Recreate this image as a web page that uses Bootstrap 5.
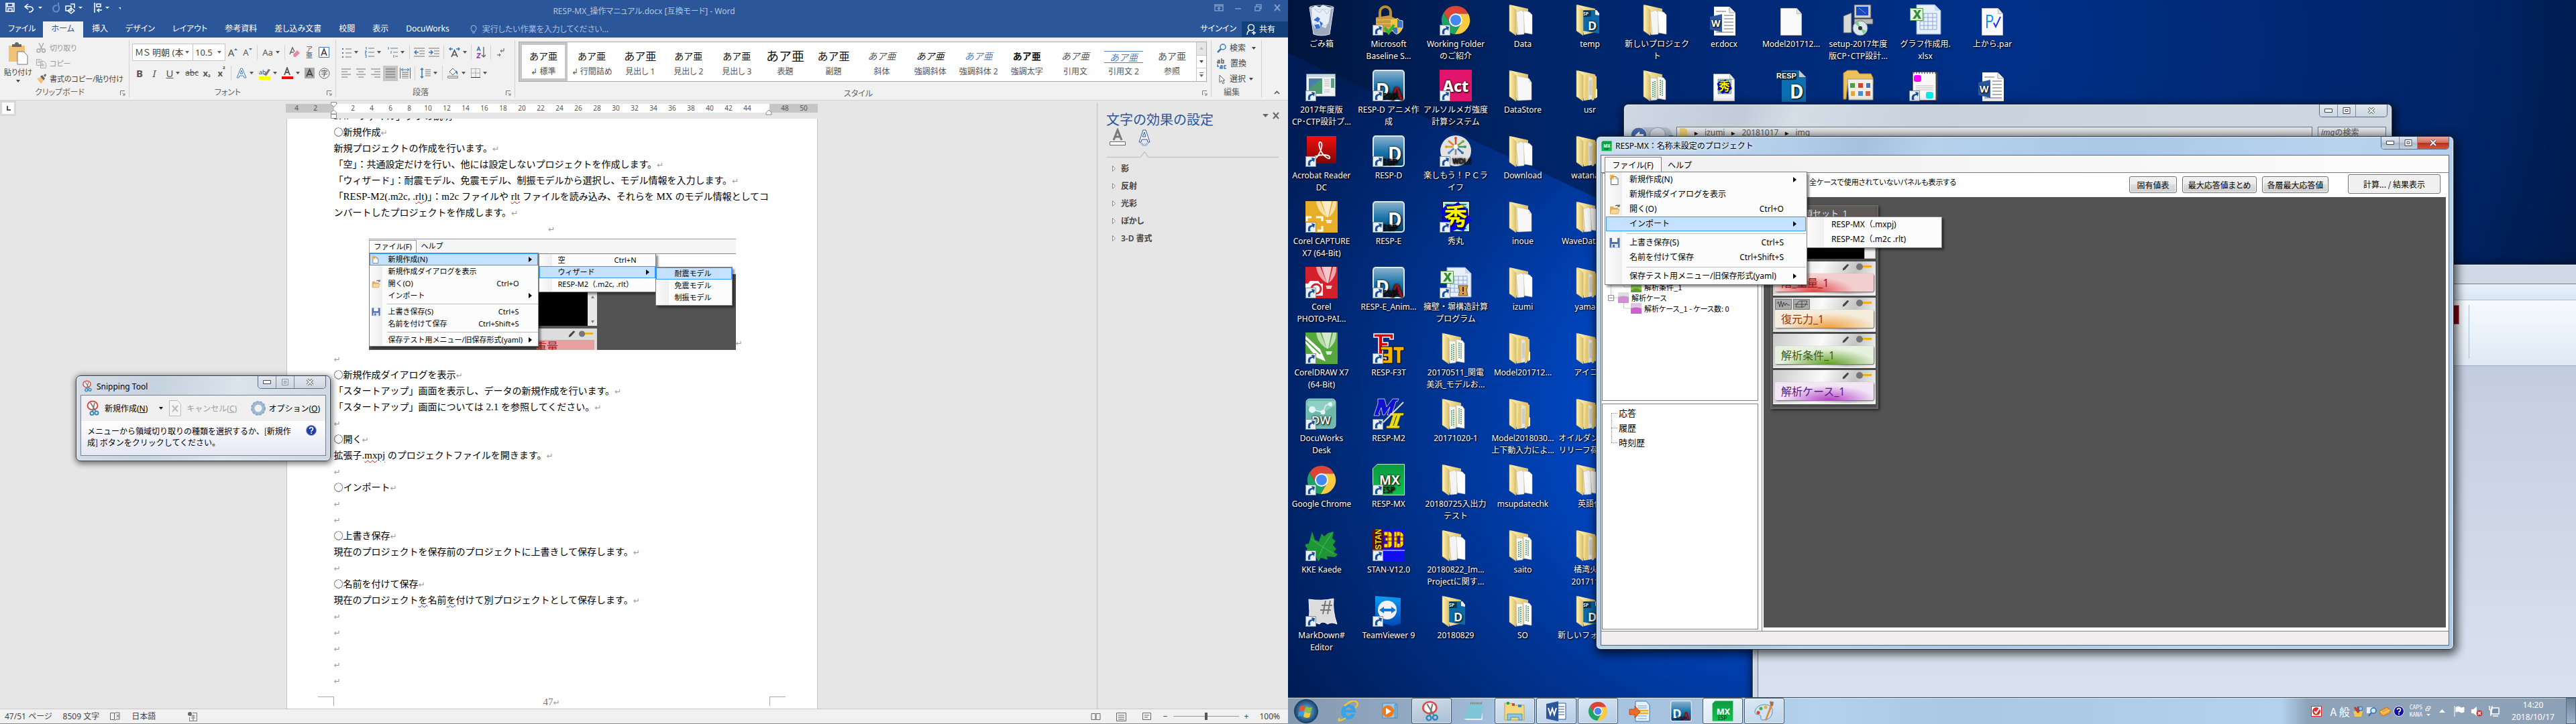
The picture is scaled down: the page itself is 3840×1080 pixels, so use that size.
<!DOCTYPE html>
<html lang="ja">
<head>
<meta charset="utf-8">
<meta name="viewport" content="width=device-width, initial-scale=1">
<title>RESP-MX_操作マニュアル.docx [互換モード] - Word</title>
<link href="https://cdn.jsdelivr.net/npm/bootstrap@5.3.0/dist/css/bootstrap.min.css" rel="stylesheet">
<style>
:root{--ui:"Noto Sans","Noto Sans CJK JP",sans-serif;--jp:"Noto Sans CJK JP","Noto Sans",sans-serif;--word:#2b579a}
body{margin:0;font:12px/18px var(--ui);color:#000;overflow:hidden}
button,select,input{font:inherit;color:inherit}
svg{flex:none;display:block}
.screen{flex:1 1 50%;min-width:0;height:100vh;position:relative;overflow:hidden}
.defs{position:absolute;width:0;height:0}
.plain{border:0;background:none;padding:0;text-align:left;white-space:nowrap}

/* ---------- Word ---------- */
.word{background:#e6e6e6;font-family:var(--ui);font-feature-settings:"palt"}
.w-title{background:var(--word);height:32px;color:#b4c5df;padding:4px 8px 0}
.w-title .wing{flex:1 1 0}
.w-title .mid{padding-top:4px;white-space:nowrap}
.w-tabs{background:var(--word);height:24px}
.w-tabs .rtab{color:#fff;text-decoration:none;padding:0 13px;line-height:22px;height:24px;white-space:nowrap}
.w-tabs .rtab.first{padding:0 10px 0 12px}
.w-tabs .rtab.on{background:#f1f1f1;color:var(--word)}
.w-tabs .hint{color:#a9bfdf;padding-left:18px}
.share{background:#124078;color:#fff;width:69px;height:23px;padding-left:6px}
.ribbon{background:#f1f1f1;height:94px;border-bottom:1px solid #d2d0d0;padding-top:4px;color:#444}
.rgroup{border-right:1px solid #d2d2d2;height:85px;position:relative}
.rg-clip{width:193px}.rg-font{width:308px}.rg-para{width:267px}.rg-edit{width:75px}.rg-end{width:39px}
.rg-clip .rtop{font-size:11px}
.rlabel{height:18px;line-height:18px;color:#666;text-align:center;padding-right:14px}
.rlabel svg{position:absolute;right:5px;bottom:2px}
.rbody{height:69px;padding:6px 4px 0;gap:7px}
.rtop{height:69px}
.rrow{height:24px}
.rb{border:0;background:none;padding:0;width:22px;height:23px;display:inline-flex;align-items:center;justify-content:center;flex:none;color:#555;font-size:15px}
.rb.sp{width:34px;gap:4px}
.rb.sel{background:#c6c6c6}
.rb.mid{font-size:13px}.rb.low{font-size:12px}
.rb.ruby{font-size:10px;line-height:9px}
.vs{width:1px;height:22px;background:#d2d2d2;margin:0 3px;flex:none}
.combo{appearance:none;border:1px solid #c6c6c6;background:#fff no-repeat right 5px center url("data:image/svg+xml,%3Csvg xmlns='http://www.w3.org/2000/svg' width='6' height='4'%3E%3Cpath d='M0 0h6L3 4z' fill='%23666'/%3E%3C/svg%3E");height:26px;padding:0 14px 0 3px;color:#444;border-radius:0;font-size:13px;line-height:22px}
.combo.a{width:91px}.combo.b{width:48px;border-left:0}
.toolbtn{height:23px;gap:5px;color:#444;display:flex;align-items:center}
.toolbtn.dis{color:#9a9a9a}
.pastebtn{width:54px;height:66px;color:#444;padding-top:3px;display:flex;flex-direction:column;align-items:center;gap:2px}
.gal{border:1px solid #ababab;background:#fff;height:60px;margin:2px 6px 0 5px}
.gal .sty{border:4px solid transparent;background:none;padding:0;flex:1 1 72px;min-width:0;text-align:center;color:#555;height:58px}
.gal .sty.on{border-color:#c6c6c6}
.gal .smp{display:block;font:14px/24px var(--jp);color:#111;font-feature-settings:normal;margin-top:4px;white-space:nowrap}
.gal .smp.h1x{font-size:16px}.gal .smp.h0x{font-size:19px}
.gal .smp.blue{color:#4f81bd}.gal .smp.soft{color:#555}
.gal .smp.lined{border:solid;border-width:1px 0;line-height:16px;margin:9px 3px 3px}
.gal .cap{display:block;font-size:12px;line-height:20px;margin-top:2px;white-space:nowrap}
.galbar{width:15px;border-left:1px solid #c6c6c6}
.galbar button{flex:1;border:0;border-bottom:1px solid #c6c6c6;background:#fff;padding:0;display:flex;align-items:center;justify-content:center}
.galbar button:last-child{border:0}
.galbar .off{background:#e6e6e6;color:#bbb}
.w-doc{padding-left:10px}
.tabbox{left:0;top:0;width:24px;height:23px;background:#d9d9d9;padding:3px}
.tabbox span{display:block;background:#fdfdfd;height:17px}
.ruler{width:793px;height:13px;margin-top:5px;font:10px/13px var(--ui);color:#555;background:#fff}
.ruler .g{background:#c6c6c6;width:72px;padding-left:2px}
.ruler .g.end{padding-left:9px}
.ruler .w{padding-left:14px}
.ruler i{width:28px;text-align:center;font-style:normal;flex:none}
.stops{left:492px;top:2px}
.sheet{width:792px;background:#fff;border:solid #c6c6c6;border-width:0 1px;padding:0 71px 0 70px;overflow:hidden;margin-top:9px;font:14px/24px var(--jp);font-feature-settings:normal;color:#000}
.sheet p{margin:0;height:24px;white-space:nowrap}
.sheet p:first-child{margin-top:-17px}
.pm::after{content:"↵";font:12px/12px "DejaVu Sans";color:#999}
.sheet .lat{font-family:"Liberation Serif",serif;font-size:15px}
.sq{text-decoration:underline wavy #e00 1px;text-underline-offset:2px}
.sqb{text-decoration:underline wavy #22f 1px;text-underline-offset:2px}
.fig{height:170px;padding:4px 0 0 52px}
.foot{margin:13px -24px 0}
.foot .cm{width:24px;height:14px;border-top:1px solid #aaa}
.foot .cl{border-right:1px solid #aaa}.foot .cr{border-left:1px solid #aaa}
.foot .no{color:#777;line-height:14px}
.w-pane{width:285px;border-left:1px solid #c0c0c0;margin-top:3px;padding:14px 13px 0 13px;color:#444}
.w-pane h2{font:20px/24px var(--ui);color:var(--word);margin:0;font-feature-settings:normal}
.w-pane li{height:26px;line-height:26px;font-weight:600;gap:7px;padding-left:9px}
.w-status{background:#f1f1f1;border-top:1px solid #c6c6c6;border-bottom:1px solid #8a8a8a;height:23px;color:#444;padding:0 12px 0 7px;line-height:20px}
.zoomer{appearance:none;width:98px;height:12px;background:linear-gradient(#999,#999) center/100% 1px no-repeat}
.zoomer::-webkit-slider-thumb{appearance:none;width:4px;height:11px;background:#555}

/* ---------- menus shared by the figure in the document and the live window ---------- */
.mnu{background:#fcfcfc;border:1px solid #808080;padding:0 1px 1px;box-shadow:3px 3px 3px rgba(0,0,0,.45);background-image:linear-gradient(90deg,#fcfcfc,#eee);background-repeat:no-repeat;background-size:25px 100%}
.mi{height:22px;border:1px solid transparent;display:flex;align-items:center;padding:0 13px 0 0;color:#000;text-decoration:none;white-space:nowrap}
.mi.on{background:#c4e1ff;border-color:#3399ff}
.mi .ic{width:34px;padding-left:4px;flex:none}
.mi .key{margin-left:auto;margin-right:19px}
.mi .tri{margin-left:auto;border:4px solid transparent;border-left:5px solid #000;border-right:0}
.ms{height:6px;display:flex;align-items:center}
.ms::after{content:"";height:1px;background:#bdbdbd;flex:1;margin-left:31px}

.figbox{width:547px;height:166px;position:relative;overflow:hidden;background:#535353;font:11px/16px var(--ui)}
.figbar{height:23px;background:#f5f5f5;border-top:1px solid #99a;border-bottom:1px solid #888;padding-top:1px}
.figbar span{padding:1px 6px 0 7px;height:20px;white-space:nowrap}
.figbar .tb{background:#fff;border:1px solid #999;border-bottom:0;width:71px}
.figwhite{height:30px;background:#fff}
.figbox .mnu{position:absolute;background-size:19px 100%;padding:0}
.figbox .mi{height:18px;padding-right:8px}
.figbox .mi .ic{width:27px;padding-left:2px}
.f1{left:0;top:21px;width:253px}
.f2{left:253px;top:22px;width:175px;height:58px}
.f3{left:427px;top:42px;width:115px;height:58px}
.figbox .ms::after{margin-left:26px}
.figunder{position:absolute;left:250px;top:80px;width:90px;height:87px}

/* ---------- Aero windows ---------- */
.aero{position:absolute;border:1px solid #303a46;border-radius:7px;box-shadow:0 0 0 1px rgba(255,255,255,.6) inset,2px 4px 14px 3px rgba(0,0,0,.65)}
.capb{position:absolute;top:0;right:6px;height:19px;border:1px solid #5c6b7d;border-top:0;border-radius:0 0 5px 5px;overflow:hidden;display:flex}
.capb button{border:0;border-right:1px solid #7f8d9c;padding:0;width:27px;background:linear-gradient(#dfe8f2,#c3cfdd 48%,#a9b8ca 50%,#c5d3e2);display:flex;align-items:center;justify-content:center}
.capb button:last-child{border:0;width:46px}
.capb button.red{background:linear-gradient(#e6a697,#d4705c 48%,#b8301c 50%,#d2583c)}
.snip{left:113px;top:560px;width:380px;height:128px;background:linear-gradient(100deg,#d6dde6,#c6d2df 30%,#dbe3ec 60%,#cdd8e4);box-shadow:0 0 0 1px rgba(255,255,255,.6) inset,1px 2px 8px 2px rgba(0,0,0,.5);font:12px/17px var(--ui);font-feature-settings:normal}
.snip .tt{height:28px;padding:2px 0 0 8px;gap:4px}
.snip .cli{margin:0 6px;height:91px;border:1px solid #76818d;background:#f0f0f0}
.snip .bar{height:38px;padding:0 8px 0 7px}
.snip .msg{height:51px;background:linear-gradient(#fff,#e4e6f3);padding:6px 9px 0 9px;font-family:var(--jp);white-space:nowrap}
.capb.gl button{background:linear-gradient(#e2e8ef,#ccd6e1)}
.off-text{color:#a0a0a0}

/* ---------- desktop ---------- */
.desk{background:radial-gradient(circle 1300px at 1050px 60px,#00308a,#002466 55%,#000a1e)}
.desk::before{content:"";position:absolute;inset:0;clip-path:polygon(0 79px,1920px 983px,1920px 1080px,0 1080px);background:radial-gradient(ellipse 900px 800px at 780px 620px,#0052dc,#0044bc 40%,#002a78 78%,#001c56)}
.icons{position:relative;display:grid;grid-auto-flow:column;grid-template-rows:repeat(10,98px);grid-auto-columns:100px;justify-content:start;z-index:0}
.icons.more{position:absolute;left:500px;top:0;grid-template-rows:repeat(2,98px)}
.di{display:flex;flex-direction:column;align-items:center;padding-top:6px;color:#fff;text-decoration:none;text-align:center;text-shadow:1px 1px 2px #000,0 0 3px #000;font:12px/18px var(--ui);width:100px}
.di svg{width:48px;height:48px;margin-bottom:3px}
.di span{white-space:nowrap}

.expl{left:500px;top:155px;width:1146px;height:400px;background:linear-gradient(110deg,#cfd8e3,#c2ccd8 14%,#d5dde7 20%,#c9d2dd 34%,#d0d9e3);border-radius:7px 7px 0 0}
.expl .nav{margin-top:33px;padding-left:8px;height:28px;color:#555}
.addr{border:1px solid #6e7782;background:linear-gradient(#e6e8ea,#b5b8bb);height:27px;padding:0 4px;gap:10px;line-height:16px}
.addr b{color:#111;font-size:10px;line-height:16px}
.addr.find{width:102px;gap:0}
.paint{left:692px;top:394px;right:-6px;height:660px;background:#d0d9e5;border-radius:7px 0 0 0;border-color:#4c5661}
.paint .inner{margin:28px 0 0 7px;border:1px solid #6e7a88;border-right:0;background:linear-gradient(#dfe8f4,#d5dfec);height:640px}
.paint .m1{height:24px;background:linear-gradient(#e8f0fa,#dbe6f4);border-bottom:1px solid #aebfd2}
.paint .m2{height:98px;background:linear-gradient(#f6fafe,#dfe9f5);border-bottom:1px solid #9db0c6;padding:7px 164px 7px 0}
.paint .m2 .swatch{width:24px;height:29px;border:1px solid #8a96a4;background:#880015;margin-right:14px}
.paint .m2 .rule{width:1px;height:80px;background:#aebfd2}
.paint .m3{height:510px;background:linear-gradient(#c3cddf,#d9e3f0)}
.mx{left:459px;top:203px;width:1279px;height:766px;background:linear-gradient(105deg,#c9dcf0,#b2cde9 20%,#a6c1dd 27%,#b5d1ec 34%,#a9c8e6 52%,#b8d3ee 75%,#aecbe8);z-index:3}
.mx .tt{height:27px;padding:0 0 0 7px;gap:5px}
.mx .tt span{text-shadow:0 0 6px #fff,0 0 8px #fff}
.mx .cli{margin:0 6px 0 6px;border:1px solid #5a6673;background:#fff;height:732px;position:relative}
.mbar{height:26px;background:linear-gradient(90deg,#f0f0f0,#fcfcfc);border-bottom:1px solid #7c7c7c;padding:2px 0 0 5px}
.mbar button{border:1px solid transparent;border-bottom:0;background:none;height:24px;padding:0 9px 0 8px;color:#000;white-space:nowrap}
.mbar button.on{background:#f9f9f9;border-color:#808080;width:85px}
.box{border:1px solid #808080;background:#fff;overflow:hidden}
.gui{font-family:var(--jp);font-feature-settings:"palt"}
.tree1{height:340px;padding:161px 0 0 8px;font-size:11px;white-space:nowrap}
.tree1 div{height:16px;line-height:16px}
.tree2{font-size:13px;flex:1;padding-top:2px}
.tree2 li{height:22px;line-height:22px;padding-left:24px}
.side{width:234px;padding:0 0 2px 1px;gap:4px}
.main{border-left:1px solid #808080;padding-left:2px;margin-left:5px;padding-right:4px;padding-bottom:5px}
.tools{height:36px;background:#fff;padding:3px 8px 0 52px;gap:8px}
.tools label{font-size:11px;padding-top:1px;white-space:nowrap}
.tools input{width:12px;height:12px;margin:4px -4px 0 0}
.wb{border:1px solid #707070;border-radius:3px;background:linear-gradient(#f2f2f2,#ebebeb 49%,#dcdcdc 50%,#cfcfcf);height:25px;padding:0;color:#000;box-shadow:0 0 0 1px #fcfcfc inset;white-space:nowrap;margin-top:2px}
.wb.s{width:71px}.wb.l{width:111px}.wb.m{width:99px}
.wb.lt{background:#f0f0f0;width:138px;height:29px;margin:-1px 0 0 21px}
.canvas{background:#535353;padding:12px 0 0 10px}
.stackp{width:161px;border:1px solid #6a6a6a;background:#4a4a4a;padding:2px 3px 6px;box-shadow:2px 2px 4px #222,0 0 0 2px #5e5e5e inset}
.stackp .hd{background:#5f5a58;color:#ddd;height:17px;line-height:18px;font-size:13px;padding-left:46px}
.stackp .blk{background:#000;height:60px;margin-bottom:4px}
.stackp .blk span{width:17px;background:#eee;border:1px solid #bbb}
.pc{height:51px;margin-bottom:3px;background:linear-gradient(110deg,#c9c9c9,#fafafa 45%,#c4c4c4 75%,#fafafa);padding:2px 3px 0;border-bottom:2px solid #eee}
.pc .tp{height:15px;padding-right:1px}
.pc .nm{border:0;display:block;width:100%;height:27px;border-radius:3px;margin-top:1px;padding:0 0 0 9px;font:16px/26px var(--ui);text-align:left;box-shadow:1px 1px 2px #555}
.k1{color:#a01010;background:radial-gradient(ellipse 60px 22px at 40% 100%,#e04444,#f3cfcf)}
.k2{color:#8a3c08;background:radial-gradient(ellipse 70px 22px at 55% 100%,#f0a040,#f6ecdc)}
.k3{color:#3a5f1c;background:radial-gradient(ellipse 70px 22px at 55% 100%,#5ea020,#e6f0de)}
.k4{color:#5a1a86;background:radial-gradient(ellipse 70px 22px at 55% 100%,#b440c8,#f2e6f6)}
.mstat{height:21px;background:#f0eeee;border-top:1px solid #808080}
.mx .m-a{position:absolute;left:5px;top:24px;width:302px}
.mx .m-b{position:absolute;left:306px;top:91px;width:202px}

.tbar{position:absolute;left:0;right:0;bottom:0;height:40px;z-index:5;border-top:1px solid #3d4a58;background:linear-gradient(90deg,#8599ae 0,#93aac4 190px,#a6c4e4 330px,#a6c2de 620px,#b4d1ed 780px,#a9c8e6 1000px,#b4d1ee 1480px,#8ea2b8 1520px,#8da1b7);box-shadow:0 1px 0 rgba(255,255,255,.5) inset;color:#fff}
.tk{width:60px;margin-right:2px;height:39px;border:1px solid transparent;background:none;padding:0;display:flex;align-items:center;justify-content:center}
.tk.orb{width:54px;margin-right:6px}
.tk.run{border-color:#46586c;border-radius:3px;background:linear-gradient(160deg,rgba(255,255,255,.6),rgba(255,255,255,.15));box-shadow:0 0 0 1px rgba(255,255,255,.55) inset}
.tk.act{background:linear-gradient(160deg,#f2f7fc,#cfe0f0)}
.tray{margin-left:auto;gap:4px}
.ime{font:16px/20px var(--jp)}
.locks{font:8px/11px "DejaVu Sans Mono",monospace}
.clock{text-align:center;width:90px;line-height:18px}
.showd{width:15px;height:39px;border:1px solid #5a6a7c;background:linear-gradient(#6e8297,#9db4cc);padding:0}
</style>
</head>
<body>
<svg class="defs" xmlns="http://www.w3.org/2000/svg">
<defs>
<linearGradient id="gF" x1="0" x2="1"><stop offset="0" stop-color="#fff3b8"/><stop offset="1" stop-color="#dcc069"/></linearGradient>
<linearGradient id="gR" x1="0" y1="0" x2="0" y2="1"><stop offset="0" stop-color="#8fb2cc"/><stop offset=".5" stop-color="#1f79ae"/><stop offset="1" stop-color="#043a5e"/></linearGradient>
<linearGradient id="gG" x1="0" y1="0" x2="0" y2="1"><stop offset="0" stop-color="#0c9a40"/><stop offset="1" stop-color="#12c050"/></linearGradient>
<linearGradient id="gA" x1="0" y1="0" x2="0" y2="1"><stop offset="0" stop-color="#f40f0f"/><stop offset="1" stop-color="#7d0606"/></linearGradient>
<linearGradient id="gT" x1="0" y1="0" x2="0" y2="1"><stop offset="0" stop-color="#0e9cf5"/><stop offset="1" stop-color="#0048b8"/></linearGradient>
<radialGradient id="gO"><stop offset="0" stop-color="#7fc4ee"/><stop offset="1" stop-color="#12406e"/></radialGradient>
</defs>
</svg>
<svg class="d-none" xmlns="http://www.w3.org/2000/svg">
<symbol id="lnk" viewBox="0 0 48 48"><path d="M.5 31.500h15v15H.5z" fill="#e8f0fa" stroke="#7d8c9c"/><path d="M4 45c-1-6 1-9 6-9l-1-3 5 1-1 6-1.500-2c-4 0-5 2-4 7z" fill="#1c4f98"/></symbol>
<symbol id="fo" viewBox="0 0 48 48"><path d="M5 1l27 6v35L15 46z" fill="url(#gF)"/><path d="M14 12l8-3 4 4v32l-9 1z" fill="#f4f4f4" stroke="#aaa" stroke-width=".5"/><path d="M25 10l9 2 4 4v29l-11-2z" fill="#fff" stroke="#bbb" stroke-width=".5"/><path d="M4 1l10 8v38L4 40z" fill="url(#gF)" stroke="#cdb25e" stroke-width=".5"/></symbol>
<symbol id="fe" viewBox="0 0 48 48"><path d="M5 1l27 6v35L15 46z" fill="url(#gF)"/><path d="M15 9l18 4 4 6v26l-20 1z" fill="#f6f6f6" stroke="#bbb" stroke-width=".5"/><path d="M33 13v6h4" fill="#ddd"/><path d="M4 1l10 8v38L4 40z" fill="url(#gF)" stroke="#cdb25e" stroke-width=".5"/></symbol>
<symbol id="ff" viewBox="0 0 48 48"><path d="M5 1l27 6v35L15 46z" fill="url(#gF)"/><path d="M18 8l4 1v36l-6 1z" fill="#e7cd75"/><path d="M22 10l6 2v32l-6 1z" fill="#e6e4da"/><path d="M24 16v22M26 15v23" stroke="#999" stroke-width=".6"/><path d="M28 7l6 3v26l-4 9-3 1z" fill="#e4c767"/><path d="M33 28l2 1v12l-3 2z" fill="#f5f0e0"/><path d="M4 1l10 8v38L4 40z" fill="url(#gF)" stroke="#cdb25e" stroke-width=".5"/></symbol>
<symbol id="fx" viewBox="0 0 48 48"><path d="M5 1l27 6v35L15 46z" fill="url(#gF)"/><path d="M14 12l10 1v32l-9 1z" fill="#f6f6f6" stroke="#aaa" stroke-width=".5"/><path d="M25 10l9 2 3 4v29l-11-2z" fill="#fff" stroke="#aaa" stroke-width=".5"/><path d="M18 18v24M21 17v25M29 15v24M32 16v24" stroke="#4b9c64" stroke-width="1.600" stroke-dasharray="2 1"/><path d="M4 1l10 8v38L4 40z" fill="url(#gF)" stroke="#cdb25e" stroke-width=".5"/></symbol>
<symbol id="fr" viewBox="0 0 48 48"><path d="M5 1l27 6v35L15 46z" fill="url(#gF)"/><path d="M14 9h20l4 5v30l-24-4z" fill="#0d6aa8"/><path d="M32 9h2l4 5v3l-6-1z" fill="#eee"/><path d="M13 10h13v9H13z" fill="#0a4166"/><text x="14" y="17" font-size="7" font-weight="700" font-family="Noto Sans" fill="#fff">SP</text><text x="21" y="39" font-size="18" font-weight="700" font-family="Noto Sans" fill="#fff">D</text><path d="M4 1l10 8v38L4 40z" fill="url(#gF)" stroke="#cdb25e" stroke-width=".5"/></symbol>
<symbol id="cr" viewBox="0 0 48 48"><path d="M24 14.500H42.800A21 21 0 0 0 6 13L15.800 28.800A9.500 9.500 0 0 1 24 14.500z" fill="#db4437"/><path d="M42.800 14.500A21 21 0 0 1 22.600 45L32.200 28.800A9.500 9.500 0 0 0 24 14.500z" fill="#fccb41"/><path d="M6 13A21 21 0 0 0 22.600 45L32.200 28.800A9.500 9.500 0 0 1 15.800 28.800z" fill="#1da362"/><circle cx="24" cy="24" r="10" fill="#fff"/><circle cx="24" cy="24" r="8" fill="#4688f1"/></symbol>
<symbol id="bin" viewBox="0 0 48 48"><path d="M6 5h36l-6 40q-12 4-24 0z" fill="#b9c4d0" fill-opacity=".85" stroke="#dfe6ee"/><path d="M9 6l6-4 6 3 5-4 7 3 5 2-3 20-5 10-8-4-8 4-4-8z" fill="#e7eef7"/><path d="M14 8l7 5 5-6 6 8 4-6M12 30l8-4 8 7 8-5" stroke="#b5c4d8" fill="none"/><ellipse cx="24" cy="5" rx="18" ry="3" fill="none" stroke="#cdd6e0"/><path d="M12 24l6-5 4 3-3 5zM13 31l7-1 2 6-6 1zM21 25l5 4-3 5z" fill="#2f6fd6"/></symbol>
<symbol id="lock" viewBox="0 0 48 48"><path d="M11 24V12a8 8 0 0 1 16 0v12" fill="none" stroke="#b98f3a" stroke-width="4"/><path d="M5 20l20-3 10 5v17l-12 4-18-3z" fill="#c79a3e"/><path d="M5 24l30-1M5 30l30-1M5 36l30-1" stroke="#e8c877"/><path d="M28 24q8 1 9-3 2 4 8 4v10q-3 8-9 10-6-2-8-10z" fill="#3a75c4" stroke="#dfe6ee"/><path d="M37 21v24q6-3 8-10H28V24" fill="#f3c53b"/><path d="M18 35l6 8 8-12" fill="none" stroke="#2fb52f" stroke-width="4"/></symbol>
<symbol id="app" viewBox="0 0 48 48"><path d="M1.500 6.500h43v33h-43z" fill="#eef2f5" stroke="#8b97a3"/><path d="M2 7h42v4H2z" fill="#c9d5e2"/><path d="M5 13h20v23H5z" fill="#4b9a72"/><path d="M5 13h20L5 28z" fill="#4a7fae"/><path d="M28 15h8M28 18h8M28 21h8M28 24h8M28 30h8M28 33h8" stroke="#b5b5b5"/><path d="M38 13h5v14h-5z" fill="#5f9c8e"/></symbol>
<symbol id="rsp" viewBox="0 0 48 48"><rect x="1" y="1" width="46" height="45" rx="4" fill="url(#gR)" stroke="#dfe8ee" stroke-width="2"/><text x="23" y="38" font-size="28" font-weight="700" font-family="Noto Sans" fill="#fff">D</text><text x="13" y="44" font-size="12" font-weight="700" font-family="Liberation Sans" fill="#111">ESP</text></symbol>
<symbol id="rda" viewBox="0 0 48 48"><rect x="1" y="1" width="46" height="45" rx="4" fill="url(#gR)" stroke="#dfe8ee" stroke-width="2"/><text x="27" y="45" font-size="26" font-weight="700" font-family="Noto Sans" fill="#8e1620">A</text><text x="5" y="39" font-size="27" font-weight="700" font-family="Noto Sans" fill="#fff">D</text><text x="13" y="44" font-size="12" font-weight="700" font-family="Liberation Sans" fill="#111">ESP</text></symbol>
<symbol id="act" viewBox="0 0 48 48"><path d="M0 0h48v47H0z" fill="#e0156b"/><text x="24" y="33" text-anchor="middle" font-size="23" font-weight="800" font-family="Noto Sans" fill="#fff">Act</text></symbol>
<symbol id="pdf" viewBox="0 0 48 48"><path d="M2 1h44v41H2z" fill="url(#gA)"/><path d="M22 10c4 0 3 10-2 18-4 7-8 10-9 7s8-6 16-6 10 3 9 5-8-2-12-9-5-15-2-15z" fill="none" stroke="#fff" stroke-width="1.800"/></symbol>
<symbol id="wdlc" viewBox="0 0 48 48"><circle cx="24" cy="23" r="23" fill="#e3e3e3"/><g stroke-width="2.500"><path d="M24 17V4" stroke="#d04a3a"/><path d="M24 17l11-8" stroke="#7aa63a"/><path d="M24 17h14" stroke="#3a9a5a"/><path d="M24 17l10 9" stroke="#2f6fb0"/><path d="M24 17v12" stroke="#888"/><path d="M24 17l-10 9" stroke="#4a8ad0"/><path d="M24 17H10" stroke="#e0a030"/><path d="M24 17l-11-9" stroke="#e07a30"/></g><g fill="#d04a3a"><circle cx="24" cy="4" r="2"/><circle cx="35" cy="9" r="2" fill="#7aa63a"/><circle cx="38" cy="17" r="2" fill="#3a9a5a"/><circle cx="34" cy="26" r="2" fill="#2f6fb0"/><circle cx="10" cy="17" r="2" fill="#e0a030"/><circle cx="14" cy="26" r="2" fill="#4a8ad0"/></g><circle cx="24" cy="17" r="3.500" fill="#fff"/><text x="19" y="42" font-size="10" font-weight="700" font-family="Liberation Sans" fill="#222">WDLC</text></symbol>
<symbol id="bal" viewBox="0 0 48 48"><g fill="#fff" fill-opacity=".6"><path d="M16 0h6l10 24q-14-8-16-24zM46 0h-5l-6 24Q47 14 46 0z"/><path d="M24 0h15l-5 24h-2zM30 28h10l-2 5h-6z" fill-opacity=".75"/></g></symbol>
<symbol id="cap" viewBox="0 0 48 48"><path d="M0 0h48v47H0z" fill="#e8ae25"/><use href="#bal"/><path d="M2 30v-6h7M16 24h9v6M25 37v7h-7" fill="none" stroke="#fff" stroke-width="3"/></symbol>
<symbol id="pho" viewBox="0 0 48 48"><path d="M0 0h48v47H0z" fill="#d3202c"/><use href="#bal"/><path d="M0 25h4l3-4h12l3 4h4v18H16L0 32z" fill="#fff"/><circle cx="16" cy="33" r="7" fill="none" stroke="#d3202c" stroke-width="3"/></symbol>
<symbol id="drw" viewBox="0 0 48 48"><path d="M0 0h48v47H0z" fill="#57a83c"/><use href="#bal"/><path d="M0 5l22 20 8 18-14-6L0 16z" fill="#fff"/><path d="M0 11l22 21" stroke="#57a83c" stroke-width="2"/></symbol>
<symbol id="dw" viewBox="0 0 48 48"><rect x="1" y="1" width="44" height="44" rx="5" fill="#6cb9ac" stroke="#a8dbd2"/><path d="M2 10q20 20 42 0v-6H4z" fill="#8fd0c5"/><path d="M10 17l16 4 4-10 8-4" stroke="#dff3ef" fill="none" stroke-width="1.500"/><circle cx="10" cy="17" r="5" fill="#e3f5f1"/><circle cx="26" cy="21" r="3.500" fill="#e3f5f1"/><circle cx="37" cy="9" r="3" fill="#e3f5f1"/><text x="9" y="39" font-size="17" font-family="Open Sans" font-weight="600" fill="#fff">DW</text></symbol>
<symbol id="leaf" viewBox="0 0 48 48"><path d="M10 3l4 12 6 3 4-12 4 4 6-5 8-2-2 10 5 4-4 6 5 6-4 4 6 4-4 4-12-1 1 5-10-3-4 6-4-10-12 2-4-4 4-8-6-6 8-1z" fill="#1f9636"/><path d="M20 40l6-14 14-22M26 26l16 10M26 26L8 14" stroke="#3fc05a" fill="none"/></symbol>
<symbol id="md" viewBox="0 0 48 48"><path d="M5 6q18 3 37-1-2 18 5 38-8-4-14 0-8-6-12 0-8-4-16 0 2-20 0-37z" fill="#dcdcdc" stroke="#fff"/><path d="M30 8l-4 20M37 8l-4 20M24 15h16M22 22h16" stroke="#777" stroke-width="2"/></symbol>
<symbol id="f3t" viewBox="0 0 48 48"><path d="M2 2h29v8h-5V7H15v8h8v5h-8v18h5v5H4v-5h5V7H2z" fill="#d00" stroke="#fff" stroke-width="1.500"/><path d="M12 21h18v25H12v-5h11v-5h-7v-5h7v-5H12z" fill="#f0b400" stroke="#000"/><path d="M31 21h16v6h-5v19h-6V27h-5z" fill="#f0b400" stroke="#000"/></symbol>
<symbol id="m2" viewBox="0 0 48 48"><path d="M8 1h10l3 12 9-12h9l-2 4h-2l-6 18h2v2H22l1-3 3-9-8 12h-3l-2-11-4 9h2l-1 3H2l6-18z" fill="#1010d0" stroke="#fff" stroke-width=".7"/><path d="M26 22h21l-1 4h-4l-5 15h4l-1 4H20l1-4h4l5-15h-5z" fill="#e8dc10" stroke="#222" stroke-width=".7"/><path d="M36 26l-5 15" stroke="#222"/><path d="M46 6L12 40" stroke="#ddd" stroke-width="2"/></symbol>
<symbol id="mxi" viewBox="0 0 48 48"><path d="M7 .5h40.500v46H.5V7z" fill="url(#gG)" stroke="#b4efc8"/><text x="10" y="31" font-size="19" font-weight="700" font-family="Noto Sans" fill="#fff">MX</text><text x="13" y="43" font-size="12" font-family="Noto Sans" fill="#111">ESP</text></symbol>
<symbol id="stn" viewBox="0 0 48 48"><path d="M0 0h48v47H0z" fill="#1010ee"/><path d="M0 0h15v31H0z" fill="#6a1010"/><text transform="rotate(-90 13 31)" x="14" y="31" font-size="12" font-weight="700" font-family="Liberation Sans" fill="#ffe400">STAN</text><path d="M0 31h48" stroke="#fff"/><path d="M17 3h9l3 3v18l-3 3h-9v-6h5v-4h-3v-5h3V9h-5zM32 3h10l4 4v16l-4 4H32z" fill="#ffe400" stroke="#7a1010"/><path d="M37 9h4v12h-4z" fill="#1010ee"/><path d="M16 11h30M16 17h30M23 3v24M36 3v24M41 3v24" stroke="#7a1010"/></symbol>
<symbol id="tv" viewBox="0 0 48 48"><path d="M4 1l38 3v38l-12 4L4 38z" fill="url(#gT)"/><circle cx="22" cy="22" r="14" fill="#f2f2f2"/><path d="M10 22l7-5v3h11v-3l7 5-7 5v-3H17v3z" fill="#1273d0"/></symbol>
<symbol id="hm" viewBox="0 0 48 48"><path d="M4.500.5h40v45h-40z" fill="#9ff4f4" stroke="#000"/><path d="M8 5h32M8 9h32M8 13h32M8 17h32M8 33h32M8 37h32M8 41h32" stroke="#000"/><path d="M1 14l10-9 9 1 8-5 6 8 8 2 1 10 5 8-8 7-4 9-10-3-9 4-5-9-9-4 2-9z" fill="#0808e0"/><text x="24" y="36" text-anchor="middle" font-size="35" font-weight="700" font-family="Noto Sans CJK JP" fill="#fff200">秀</text></symbol>
<symbol id="xl" viewBox="0 0 48 48"><path d="M11 1h27l9 9v35H11z" fill="#e8f0fb" stroke="#7fa0cc"/><path d="M38 1v9h9" fill="#c5d8f0"/><path d="M16 14h25v24H16zM16 20h25M16 26h25M16 32h25M22 14v24M28 14v24M35 14v24" fill="none" stroke="#88a8d4"/><path d="M1.500 6.500h19v18h-19z" fill="#e7f3e2" stroke="#4c9a40"/><path d="M6 9h4l2 4 2-4h4l-4 6 4 7h-4l-2-4-3 4H5l5-7z" fill="#2f8f2f"/></symbol>
<symbol id="scr" viewBox="0 0 48 48"><path d="M28 28h14l-2 6 2 9H28l2-7z" fill="#d9a04c" stroke="#7a5018"/><path d="M35 30v7M35 39v2" stroke="#3a2408" stroke-width="2"/></symbol>
<symbol id="doc" viewBox="0 0 48 48"><path d="M9 4h23l9 9v34H9z" fill="#fff"/><path d="M32 4v9h9" fill="#eee" stroke="#888" stroke-width=".8"/><path d="M12 11h15M24 17h14M24 22h14M24 27h14M24 32h14M24 37h14M12 42h26" stroke="#999" stroke-width="1.500"/><path d="M3 19l18-4v27L3 38z" fill="#2b579a"/><text x="5" y="34" font-size="14" font-weight="700" font-family="Open Sans" fill="#fff">W</text></symbol>
<symbol id="blank" viewBox="0 0 48 48"><path d="M8.500 6.500h24l7 8v32h-31z" fill="#fafafa" stroke="#bbb"/><path d="M32.500 6.500v8h7" fill="#e5e5e5" stroke="#bbb"/></symbol>
<symbol id="hmd" viewBox="0 0 48 48"><use href="#blank"/><use href="#hm" x="13" y="13" width="23" height="25"/></symbol>
<symbol id="rdoc" viewBox="0 0 48 48"><path d="M10 1h26l10 10v37H10z" fill="#0b70b2"/><path d="M36 1v10h10z" fill="#ccc"/><path d="M1 3h31v12H1z" fill="#0a3c5c"/><text x="2" y="13" font-size="11" font-weight="700" font-family="Liberation Sans" fill="#fff">RESP</text><text x="22" y="43" font-size="28" font-weight="700" font-family="Noto Sans" fill="#fff">D</text></symbol>
<symbol id="stp" viewBox="0 0 48 48"><path d="M18 1h25v20H18z" fill="#cfcfcf" stroke="#444"/><path d="M21 4h18v13H21z" fill="#1848c0"/><path d="M25 6l10 8" stroke="#7ad"/><path d="M18 22h28v8H18z" fill="#bbb" stroke="#444"/><path d="M2 18l12-5v30H2z" fill="#d8d8d8" stroke="#555"/><circle cx="27" cy="36" r="11" fill="#d8e8ee" stroke="#777"/><path d="M27 36l-8-7 5-3zM27 36l9 4-4 5z" fill="#7fd08a"/><circle cx="27" cy="36" r="3" fill="#333"/></symbol>
<symbol id="prg" viewBox="0 0 48 48"><path d="M2 5l6-4h14l4 5h17l3 6v10H8l-2 22H2z" fill="#eec05a" stroke="#b48428"/><path d="M8 14h38v31H10z" fill="#f3efe2" stroke="#999"/><path d="M12 20h7v7h-7z" fill="#4aa04a"/><path d="M24 20h7v7h-7z" fill="#c8483c"/><path d="M36 20h6v7h-6z" fill="#4a70b8"/><path d="M13 32h6v7h-6z" fill="#e0a838"/><path d="M24 32h7v7h-7z" fill="#4a90c8"/><path d="M35 32h7v7h-7z" fill="#e0603c"/></symbol>
<symbol id="npd" viewBox="0 0 48 48"><path d="M5 3h36v43H5z" fill="#f8f8f8" stroke="#111"/><path d="M41 4v42" stroke="#444" stroke-width="3"/><path d="M7 2v4M11 2v4M15 2v4M19 2v4M23 2v4M27 2v4M31 2v4M35 2v4M39 2v4" stroke="#222"/><rect x="7" y="8" width="11" height="10" rx="3" fill="#f0f"/><path d="M10 24h26M10 27h26M10 30h26" stroke="#bbb"/><rect x="25" y="33" width="11" height="10" rx="3" fill="#0ee"/></symbol>
<symbol id="par" viewBox="0 0 48 48"><use href="#blank"/><path d="M16 36V17h6q5 4 0 9h-6" fill="none" stroke="#1a90f0" stroke-width="2"/><path d="M26 28l3 6 7-15" fill="none" stroke="#2030f0" stroke-width="2"/></symbol>
<symbol id="sc" viewBox="0 0 24 24"><ellipse cx="10" cy="8" rx="7.500" ry="6.500" fill="#fff" stroke="#d84a42" stroke-width="2"/><path d="M7 4l8 13M13 4L10 17" stroke="#777" stroke-width="1.600"/><circle cx="9" cy="19.500" r="2.600" fill="none" stroke="#2a86bd" stroke-width="1.800"/><circle cx="16" cy="19" r="2.600" fill="none" stroke="#2a86bd" stroke-width="1.800"/></symbol>
<symbol id="pen" viewBox="0 0 16 16"><path d="M2 14l1-4 8-8 3 2-8 9z" fill="#444"/></symbol>
<symbol id="key" viewBox="0 0 26 12"><path d="M9 4h15v3H9z" fill="#f5ae12"/><circle cx="6" cy="6" r="5" fill="#777"/></symbol>
<symbol id="dd" viewBox="0 0 6 4"><path d="M0 0h6L3 4z" fill="currentColor"/></symbol>
<symbol id="lch" viewBox="0 0 8 8"><path d="M.5 7V.5H7M3.500 3.500l3 3M7 4v3H4" fill="none" stroke="#777"/></symbol>
<symbol id="exp" viewBox="0 0 6 10"><path d="M.5.500v8l4-4z" fill="#fff" stroke="#888"/></symbol>
<symbol id="cmin" viewBox="0 0 12 6"><path d="M.5.500h11v5H.5z" fill="#fff" stroke="#445"/></symbol>
<symbol id="cmax" viewBox="0 0 12 10"><path d="M1 .5h10v9H1zM4 3.500h4v3H4z" fill="#fff" stroke="#445"/></symbol>
<symbol id="ccls" viewBox="0 0 12 10"><path d="M2 1l8 8M10 1L2 9" stroke="#444" stroke-width="3.500"/><path d="M2 1l8 8M10 1L2 9" stroke="#fff" stroke-width="1.800"/></symbol>
<symbol id="nw" viewBox="0 0 16 16"><path d="M3 3.500h7l3 3V15.500H2.500V6" fill="#fff" stroke="#666"/><path d="M10 3v4h3" fill="none" stroke="#999"/><path d="M4 0v8M0 4h8M1 1l6 6M7 1L1 7" stroke="#f0a020" stroke-width="1.200"/></symbol>
<symbol id="op" viewBox="0 0 16 16"><path d="M1 15V4h5l1 2h6v9z" fill="#e0b060"/><path d="M3 8h12l-2 7H1z" fill="#f8d89a" stroke="#c09040" stroke-width=".6"/><path d="M9 3q3-2 5 0M15 1v3h-3" stroke="#222" fill="none"/></symbol>
<symbol id="sv" viewBox="0 0 16 16"><path d="M.5 1h15v14.500H.5z" fill="#5570ae"/><path d="M4 1h8v6H4z" fill="#fff"/><path d="M3 10h10v5.500H3z" fill="#dfe6f4"/><path d="M5 11h3v4H5z" fill="#5570ae"/></symbol>
</svg>

<div class="d-flex">
<!-- left monitor -->
<section class="screen word d-flex flex-column">
  <header>
    <div class="w-title d-flex align-items-start">
      <div class="wing"><svg width="172" height="18" viewBox="0 0 172 18" fill="none" stroke="#fff" stroke-width="1.500"><path d="M1 1h12v12H1zM3 1v5h8V1M4 13V9h6v4M30 6h7q5 1 4 5-2 3-6 3M34 2l-5 4 5 4"/><path d="M77 4q-6 0-6 6 2 5 7 3 4-3 1-9V0" stroke="#6c8bc0" stroke-width="2"/><path d="M90 5h8v7h-8zM97 2h6v6M98 8l5 4-5 4-5-4zM133 0v15M136 2h6v4h-6zM144 11h-7M140 9l-3 2 3 3"/><path d="M49 6h6l-3 3zM109 6h6l-3 3zM149 6h6l-3 3zM169 7h6l-3 3z" fill="#fff" stroke="none"/></svg></div>
      <div class="mid">RESP-MX_操作マニュアル.docx [互換モード] - Word</div>
      <div class="wing d-flex justify-content-end"><svg width="104" height="18" viewBox="0 0 104 18" fill="none" stroke="#7f9cc9" stroke-width="1.500"><path d="M3 3h12v9H3zM3 5h12M9 12V7M7 9l2-2 2 2M33 9h9M63 6h7v6h-7zM65 5V3h7v6h-2"/><path d="M92 3l8 9M100 3l-8 9" stroke-width="2"/></svg></div>
    </div>
    <nav class="w-tabs d-flex">
      <a class="rtab first" href="#">ファイル</a><a class="rtab on" href="#">ホーム</a><a class="rtab" href="#">挿入</a><a class="rtab" href="#">デザイン</a><a class="rtab" href="#">レイアウト</a><a class="rtab" href="#">参考資料</a><a class="rtab" href="#">差し込み文書</a><a class="rtab" href="#">校閲</a><a class="rtab" href="#">表示</a><a class="rtab" href="#">DocuWorks</a>
      <a class="rtab hint d-flex align-items-center gap-2" href="#"><svg width="10" height="14" viewBox="0 0 10 14" fill="none" stroke="#a9bfdf"><path d="M3 10Q1 7 1 5a4 4 0 0 1 8 0q0 2-2 5zM3 12h4"/></svg>実行したい作業を入力してください...</a>
      <a class="rtab ms-auto pe-2" href="#">サインイン</a>
      <button class="plain share d-flex align-items-center gap-1"><svg width="16" height="18" viewBox="0 0 16 18" fill="none" stroke="#fff" stroke-width="1.500"><circle cx="8" cy="6" r="4.500"/><path d="M2 17q0-5 4-7M9 14h6M12 11v6"/></svg>共有</button>
    </nav>
    <div class="ribbon d-flex">
      <div class="rgroup rg-clip">
        <div class="rtop d-flex">
          <button class="plain pastebtn"><svg width="30" height="34" viewBox="0 0 30 34"><path d="M1 5h24v24H1z" fill="#efc377"/><path d="M6 7V3h4q0-3 3-3t3 3h4v4z" fill="#666"/><path d="M14 14h9l6 6v13H14z" fill="#fff" stroke="#777"/></svg><span>貼り付け</span><svg width="6" height="4"><use href="#dd"/></svg></button>
          <div>
            <button class="plain toolbtn dis"><svg width="15" height="15" viewBox="0 0 15 15" fill="none" stroke="#aaa" stroke-width="1.500"><path d="M4 0l5 10M11 0L6 10"/><circle cx="3.500" cy="11.500" r="2.500"/><circle cx="11" cy="11.500" r="2.500"/></svg>切り取り</button>
            <button class="plain toolbtn dis"><svg width="15" height="15" viewBox="0 0 15 15" fill="none" stroke="#aaa"><path d="M.5 1.500h6l2 2v7h-8zM6.500 4.500h5l3 3v7h-8zM2 4h4M2 6h4M8 9h4M8 11h4"/></svg>コピー</button>
            <button class="plain toolbtn"><svg width="15" height="15" viewBox="0 0 15 15"><path d="M1 7l6-2 4 5-4 5z" fill="#efc377"/><path d="M6 4l3-2 4 5-2 3zM11 2l3-2 1 2-2 3z" fill="#666"/></svg>書式のコピー/貼り付け</button>
          </div>
        </div>
        <div class="rlabel">クリップボード<svg width="8" height="8"><use href="#lch"/></svg></div>
      </div>
      <div class="rgroup rg-font">
        <div class="rbody d-flex flex-column">
          <div class="rrow d-flex align-items-center">
            <select class="combo a" aria-label="フォント"><option>ＭＳ 明朝 (本</option></select><select class="combo b" aria-label="サイズ"><option>10.5</option></select>
            <button class="rb">A<svg width="5" height="12" viewBox="0 0 5 12"><path d="M0 3h5L2.500 0z" fill="#3a78b8"/></svg></button><button class="rb mid">A<svg width="5" height="12" viewBox="0 0 5 12"><path d="M0 0h5L2.500 3z" fill="#3a78b8"/></svg></button>
            <i class="vs"></i><button class="rb sp mid">Aa<svg width="6" height="4"><use href="#dd"/></svg></button><i class="vs"></i>
            <button class="rb"><svg width="18" height="18" viewBox="0 0 18 18"><path d="M2 12L6 2l3 6M3 9h5" stroke="#666" fill="none" stroke-width="1.500"/><path d="M7 12l6-6 4 4-6 6H8z" fill="#e88aa0"/></svg></button><button class="rb ruby">ア<br>亜</button><button class="rb"><svg width="16" height="16" viewBox="0 0 16 16"><path d="M.5.500h15v15H.5z" fill="#fff" stroke="#3a78b8"/><path d="M4 13L8 3l4 10M5.500 10h5" stroke="#444" stroke-width="1.700" fill="none"/></svg></button>
          </div>
          <div class="rrow d-flex align-items-center">
            <button class="rb fw-bold">B</button><button class="rb fst-italic">I</button><button class="rb sp"><u>U</u><svg width="6" height="4"><use href="#dd"/></svg></button><button class="rb low"><s>abc</s></button><button class="rb mid fw-bold">x<sub>₂</sub></button><button class="rb mid fw-bold">x<sup>²</sup></button><i class="vs"></i>
            <button class="rb sp"><svg width="16" height="16" viewBox="0 0 16 16"><path d="M1 15L7 1h2l6 14h-3l-1-3H5l-1 3zM6 9h4L8 4z" fill="#fff" stroke="#3a78b8"/></svg><svg width="6" height="4"><use href="#dd"/></svg></button>
            <button class="rb sp"><svg width="17" height="20" viewBox="0 0 17 20"><path d="M0 15h17v5H0z" fill="#ff0"/><text x="0" y="12" font-size="9" font-family="Noto Sans" fill="#444">ab</text><path d="M8 13l6-9 3 1-6 9z" fill="#777"/></svg><svg width="6" height="4"><use href="#dd"/></svg></button>
            <button class="rb sp"><svg width="17" height="18" viewBox="0 0 17 18"><path d="M0 14h17v4H0z" fill="#f00"/><path d="M4 12L8 1l4 11M5.500 8h5" stroke="#555" stroke-width="1.800" fill="none"/></svg><svg width="6" height="4"><use href="#dd"/></svg></button>
            <button class="rb"><svg width="15" height="16" viewBox="0 0 15 16"><path d="M0 0h15v16H0z" fill="#aaa"/><path d="M3 13L7.500 3 12 13M5 10h5" stroke="#444" stroke-width="1.800" fill="none"/></svg></button><button class="rb"><svg width="17" height="17" viewBox="0 0 17 17"><circle cx="8.500" cy="8.500" r="7.500" fill="none" stroke="#666"/><text x="3.500" y="12" font-size="10" font-family="Noto Sans CJK JP" fill="#444">字</text></svg></button>
          </div>
        </div>
        <div class="rlabel">フォント<svg width="8" height="8"><use href="#lch"/></svg></div>
      </div>
      <div class="rgroup rg-para">
        <div class="rbody d-flex flex-column">
          <div class="rrow d-flex align-items-center">
            <button class="rb sp"><svg width="14" height="15" viewBox="0 0 14 15"><path d="M5 2h9M5 8h9M5 14h9" stroke="#777"/><path d="M0 1h2v2H0zM0 7h2v2H0zM0 13h2v2H0z" fill="#3a78b8"/></svg><svg width="6" height="4"><use href="#dd"/></svg></button>
            <button class="rb sp"><svg width="14" height="16" viewBox="0 0 14 16"><path d="M5 2h9M5 8h9M5 14h9" stroke="#777"/><path d="M1 0h1v4M0 6h2v2H0v2h2M0 12h2v4H0" stroke="#3a78b8" fill="none"/></svg><svg width="6" height="4"><use href="#dd"/></svg></button>
            <button class="rb sp"><svg width="15" height="16" viewBox="0 0 15 16"><path d="M4 2h11M8 8h7M11 14h4" stroke="#777"/><path d="M1 0v4M5 6v4M9 12v4" stroke="#3a78b8"/></svg><svg width="6" height="4"><use href="#dd"/></svg></button><i class="vs"></i>
            <button class="rb"><svg width="16" height="14" viewBox="0 0 16 14"><path d="M0 1h16M8 5h8M8 9h8M0 13h16" stroke="#777"/><path d="M1 7h6M4 4L1 7l3 3" stroke="#3a78b8" stroke-width="1.500" fill="none"/></svg></button><button class="rb"><svg width="16" height="14" viewBox="0 0 16 14"><path d="M0 1h16M8 5h8M8 9h8M0 13h16" stroke="#777"/><path d="M0 7h6M3 4l3 3-3 3" stroke="#3a78b8" stroke-width="1.500" fill="none"/></svg></button><i class="vs"></i>
            <button class="rb sp"><svg width="17" height="16" viewBox="0 0 17 16"><path d="M4 15L8.500 5 13 15M6 12h5" stroke="#555" stroke-width="1.700" fill="none"/><path d="M1 3h5M3 1L1 3l2 2M11 3h5M14 1l2 2-2 2" stroke="#3a78b8" stroke-width="1.500" fill="none"/></svg><svg width="6" height="4"><use href="#dd"/></svg></button><i class="vs"></i>
            <button class="rb"><svg width="15" height="18" viewBox="0 0 15 18" fill="none" stroke-width="1.400"><path d="M1 7l2.500-6L6 7M2 5h3" stroke="#3a78b8"/><path d="M1 11h5l-5 6h5" stroke="#8a3ab0"/><path d="M11 1v14M8 13l3 3 3-3" stroke="#666"/></svg></button><i class="vs"></i><button class="rb"><svg width="12" height="14" viewBox="0 0 12 14" fill="none" stroke="#555"><path d="M11 1v4H6M8 3L6 5l2 2M1 11h5M4 9l2 2-2 2"/></svg></button>
          </div>
          <div class="rrow d-flex align-items-center">
            <button class="rb"><svg width="14" height="14" viewBox="0 0 14 14" stroke="#777"><path d="M0 1h14M0 5h9M0 9h14M0 13h9"/></svg></button><button class="rb"><svg width="14" height="14" viewBox="0 0 14 14" stroke="#777"><path d="M0 1h14M3 5h8M0 9h14M3 13h8"/></svg></button><button class="rb"><svg width="14" height="14" viewBox="0 0 14 14" stroke="#777"><path d="M0 1h14M5 5h9M0 9h14M5 13h9"/></svg></button><button class="rb sel"><svg width="14" height="14" viewBox="0 0 14 14" stroke="#666"><path d="M0 1h14M0 5h14M0 9h14M0 13h14"/></svg></button><button class="rb"><svg width="16" height="16" viewBox="0 0 16 16" stroke="#666" fill="none"><path d="M.5 0v16M15.500 0v16M3 7h10M3 10h10M3 13h10M3 16h10"/><path d="M2 3h12M5 1L2 3l3 2M11 1l3 2-3 2" stroke="#3a78b8"/></svg></button><i class="vs"></i>
            <button class="rb sp"><svg width="16" height="16" viewBox="0 0 16 16" fill="none"><path d="M3 1v14M1 3l2-2 2 2M1 13l2 2 2-2" stroke="#3a78b8" stroke-width="1.500"/><path d="M8 3h8M8 6h8M8 9h8M8 12h8" stroke="#777"/></svg><svg width="6" height="4"><use href="#dd"/></svg></button><i class="vs"></i>
            <button class="rb sp"><svg width="17" height="16" viewBox="0 0 17 16"><path d="M.5 12.500h15v3H.5z" fill="#ddd" stroke="#888"/><path d="M3 6l5-5 5 5-5 5z" fill="#fff" stroke="#666"/><path d="M13 4q3 2 2 6-3-1-2-6z" fill="#3a78b8"/></svg><svg width="6" height="4"><use href="#dd"/></svg></button>
            <button class="rb sp"><svg width="14" height="14" viewBox="0 0 14 14" fill="none" stroke="#777" stroke-dasharray="1 1"><path d="M.5.500h13v13M.5.500v13M7 0v13M0 7h13"/><path d="M0 13.500h14" stroke-dasharray="none" stroke="#333"/></svg><svg width="6" height="4"><use href="#dd"/></svg></button>
          </div>
        </div>
        <div class="rlabel">段落<svg width="8" height="8"><use href="#lch"/></svg></div>
      </div>
      <div class="rgroup flex-grow-1">
        <div class="rtop">
        <div class="gal d-flex">
          <button class="sty on"><span class="smp">あア亜</span><span class="cap">↲ 標準</span></button>
          <button class="sty"><span class="smp">あア亜</span><span class="cap">↲ 行間詰め</span></button>
          <button class="sty"><span class="smp h1x">あア亜</span><span class="cap">見出し 1</span></button>
          <button class="sty"><span class="smp">あア亜</span><span class="cap">見出し 2</span></button>
          <button class="sty"><span class="smp">あア亜</span><span class="cap">見出し 3</span></button>
          <button class="sty"><span class="smp h0x">あア亜</span><span class="cap">表題</span></button>
          <button class="sty"><span class="smp h1x">あア亜</span><span class="cap">副題</span></button>
          <button class="sty"><span class="smp fst-italic soft">あア亜</span><span class="cap">斜体</span></button>
          <button class="sty"><span class="smp fst-italic">あア亜</span><span class="cap">強調斜体</span></button>
          <button class="sty"><span class="smp fst-italic blue">あア亜</span><span class="cap">強調斜体 2</span></button>
          <button class="sty"><span class="smp fw-bold">あア亜</span><span class="cap">強調太字</span></button>
          <button class="sty"><span class="smp fst-italic soft">あア亜</span><span class="cap">引用文</span></button>
          <button class="sty"><span class="smp fst-italic blue lined">あア亜</span><span class="cap">引用文 2</span></button>
          <button class="sty"><span class="smp soft">あア亜</span><span class="cap">参照</span></button>
          <div class="galbar d-flex flex-column"><button class="off" aria-label="上"><svg width="6" height="4" viewBox="0 0 6 4"><path d="M0 4h6L3 0z" fill="currentColor"/></svg></button><button aria-label="下"><svg width="6" height="4"><use href="#dd"/></svg></button><button aria-label="その他"><svg width="6" height="7" viewBox="0 0 6 7"><path d="M0 0h6v1H0zM0 3h6L3 7z" fill="#666"/></svg></button></div>
        </div></div>
        <div class="rlabel">スタイル<svg width="8" height="8"><use href="#lch"/></svg></div>
      </div>
      <div class="rgroup rg-edit">
        <div class="rtop ps-2">
          <button class="plain toolbtn"><svg width="14" height="14" viewBox="0 0 14 14" fill="none" stroke="#3a78b8"><circle cx="9" cy="5" r="4" stroke-width="1.500"/><path d="M6 8l-5 5" stroke-width="2.500"/></svg><span class="me-1">検索</span><svg width="6" height="4"><use href="#dd"/></svg></button>
          <button class="plain toolbtn"><svg width="15" height="16" viewBox="0 0 15 16" fill="none" stroke-width="1.500"><path d="M1 3h3v4H1V5h3M7 0v7h3V3H7" stroke="#666"/><path d="M5 11h3v4H5v-2h3M14 11h-3v4h3M1 9v3h2" stroke="#3a78b8"/></svg>置換</button>
          <button class="plain toolbtn"><svg width="14" height="14" viewBox="0 0 14 14"><path d="M4 1v11l3-3 2 5 2-1-2-4h3z" fill="#fff" stroke="#666"/></svg>選択<svg width="6" height="4"><use href="#dd"/></svg></button>
        </div>
        <div class="rlabel">編集</div>
      </div>
      <div class="rg-end d-flex align-items-end justify-content-end pb-1 pe-2"><svg class="mb-1 me-1" width="9" height="6" viewBox="0 0 9 6"><path d="M1 5l3.500-3.500L8 5" fill="none" stroke="#555" stroke-width="1.600"/></svg></div>
    </div>
  </header>

  <div class="d-flex flex-grow-1 overflow-hidden">
    <main class="w-doc flex-grow-1 d-flex flex-column align-items-center position-relative">
      <div class="tabbox position-absolute"><span><svg width="18" height="17" viewBox="0 0 18 17"><path d="M8 5v6h5" fill="none" stroke="#555" stroke-width="2"/></svg></span></div>
      <div class="ruler d-flex flex-shrink-0">
        <div class="g d-flex"><i>4</i><i>2</i></div>
        <div class="w d-flex flex-grow-1"><i>2</i><i>4</i><i>6</i><i>8</i><i>10</i><i>12</i><i>14</i><i>16</i><i>18</i><i>20</i><i>22</i><i>24</i><i>26</i><i>28</i><i>30</i><i>32</i><i>34</i><i>36</i><i>38</i><i>40</i><i>42</i><i>44</i></div>
        <div class="g end d-flex"><i>48</i><i>50</i></div>
      </div>
      <svg class="stops position-absolute" width="662" height="25" viewBox="0 0 662 25" fill="#fff" stroke="#888"><path d="M1.500.5h8v3l-4 4-4-4zM5.500 12l4 4v2h-8v-2zM1.500 18.500h8v6h-8zM654 12l4 4v3h-8v-3z"/></svg>
      <article class="sheet flex-grow-1">
        <p><span class="lat">3.4.</span>「ファイル」タブの説明</p>
        <p class="pm">○新規作成</p>
        <p class="pm">新規プロジェクトの作成を行います。</p>
        <p class="pm">「空」：共通設定だけを行い、他には設定しないプロジェクトを作成します。</p>
        <p class="pm">「ウィザード」：耐震モデル、免震モデル、制振モデルから選択し、モデル情報を入力します。</p>
        <p>「<span class="lat">RESP-M2(.m2c, .<span class="sq">rlt</span>)</span>」：<span class="lat">m2c </span>ファイルや<span class="lat"> <span class="sq">rlt</span> </span>ファイルを読み込み、それらを<span class="lat"> MX </span>のモデル情報としてコ</p>
        <p class="pm">ンバートしたプロジェクトを作成します。</p>
        <p class="pm text-center"></p>
        <div class="fig d-flex align-items-end">
          <div class="figbox align-self-start">
            <div class="figbar d-flex"><span class="tb">ファイル(F)</span><span>ヘルプ</span></div>
            <div class="figwhite"></div>
            <svg class="figunder" viewBox="0 0 90 87"><path d="M0 0h76v50H0z"/><path d="M76 0h14v50H76z" fill="#e8e8e8"/><path d="M81 9h5l-2.500-4zM81 42h5l-2.500 4z" fill="#777"/><path d="M0 54h90v33H0z" fill="#ddd"/><path d="M0 71h86v16H0z" fill="#e8a0a0"/><text x="-2" y="88" font-size="17" font-family="Noto Sans CJK JP" fill="#b01818">重量</text><use href="#pen" x="46" y="55" width="13" height="14"/><use href="#key" x="62" y="56" width="24" height="12"/></svg>
            <div class="mnu f1">
              <div class="mi on"><span class="ic"><svg width="12" height="14"><use href="#nw"/></svg></span>新規作成(N)<i class="tri"></i></div>
              <div class="mi"><span class="ic"></span>新規作成ダイアログを表示</div>
              <div class="mi"><span class="ic"><svg width="13" height="14"><use href="#op"/></svg></span>開く(O)<span class="key">Ctrl+O</span></div>
              <div class="mi"><span class="ic"></span>インポート<i class="tri"></i></div>
              <div class="ms"></div>
              <div class="mi"><span class="ic"><svg width="13" height="14"><use href="#sv"/></svg></span>上書き保存(S)<span class="key">Ctrl+S</span></div>
              <div class="mi"><span class="ic"></span>名前を付けて保存<span class="key">Ctrl+Shift+S</span></div>
              <div class="ms"></div>
              <div class="mi"><span class="ic"></span>保存テスト用メニュー/旧保存形式(yaml)<i class="tri"></i></div>
            </div>
            <div class="mnu f2">
              <div class="mi"><span class="ic"></span>空<span class="key">Ctrl+N</span></div>
              <div class="mi on"><span class="ic"></span>ウィザード<i class="tri"></i></div>
              <div class="mi"><span class="ic"></span>RESP-M2（.m2c, .rlt）</div>
            </div>
            <div class="mnu f3">
              <div class="mi on"><span class="ic"></span>耐震モデル</div>
              <div class="mi"><span class="ic"></span>免震モデル</div>
              <div class="mi"><span class="ic"></span>制振モデル</div>
            </div>
          </div><span class="pm"></span>
        </div>
        <p class="pm"></p>
        <p class="pm">○新規作成ダイアログを表示</p>
        <p class="pm">「スタートアップ」画面を表示し、データの新規作成を行います。</p>
        <p class="pm">「スタートアップ」画面については<span class="lat"> 2.1 </span>を参照してください。</p>
        <p class="pm"></p>
        <p class="pm">○開く</p>
        <p class="pm">拡張子<span class="lat">.<span class="sq">mxpj</span> </span>のプロジェクトファイルを開きます。</p>
        <p class="pm"></p>
        <p class="pm">○インポート</p>
        <p class="pm"></p>
        <p class="pm"></p>
        <p class="pm">○上書き保存</p>
        <p class="pm">現在のプロジェクトを保存前のプロジェクトに上書きして保存します。</p>
        <p class="pm"></p>
        <p class="pm">○名前を付けて保存</p>
        <p class="pm">現在のプロジェクト<span class="sqb">を</span>名前<span class="sqb">を</span>付けて別プロジェクトとして保存します。</p>
        <p class="pm"></p><p class="pm"></p><p class="pm"></p><p class="pm"></p><p class="pm"></p>
        <div class="foot d-flex justify-content-between"><span class="cm cl"></span><span class="no pm"><span class="lat">47</span></span><span class="cm cr"></span></div>
      </article>
    </main>
    <aside class="w-pane flex-shrink-0">
      <div class="d-flex"><h2>文字の効果の設定</h2><svg class="ms-auto" width="26" height="12" viewBox="0 0 26 12"><path d="M1 3h9l-4.500 5z" fill="#666"/><path d="M17 1l8 9M25 1l-8 9" stroke="#666" stroke-width="2"/></svg></div>
      <svg width="257" height="48" viewBox="0 0 257 48" fill="none"><path d="M11 18L17 3l6 15M13 13h8" stroke="#777" stroke-width="3"/><path d="M5.500 20.500h23v5h-23z" fill="#fff" stroke="#666"/><path d="M49 21l6-18h4l6 18h-3l-1-4h-8l-1 4zM54 13h5l-2-7z" fill="#fff" stroke="#2b579a"/><path d="M50 22h4l3 3 3-3h4l-4 5h-6z" fill="#a9bede"/><path d="M0 43.500h51l6-8 6 8h194" stroke="#c6c6c6" stroke-width="1.500"/></svg>
      <ul class="list-unstyled m-0">
        <li class="d-flex align-items-center"><svg width="6" height="10"><use href="#exp"/></svg>影</li>
        <li class="d-flex align-items-center"><svg width="6" height="10"><use href="#exp"/></svg>反射</li>
        <li class="d-flex align-items-center"><svg width="6" height="10"><use href="#exp"/></svg>光彩</li>
        <li class="d-flex align-items-center"><svg width="6" height="10"><use href="#exp"/></svg>ぼかし</li>
        <li class="d-flex align-items-center"><svg width="6" height="10"><use href="#exp"/></svg>3-D 書式</li>
      </ul>
    </aside>
  </div>
  <footer class="w-status d-flex align-items-center">
    <span class="me-3">47/51 ページ</span><span class="me-3">8509 文字</span>
    <svg class="me-3" width="16" height="14" viewBox="0 0 16 14" fill="none" stroke="#666"><path d="M.5 1.500h6v10h-6zM7 2l2-1h5v10H9l-2 2M10 4l3 4M13 4l-3 4"/></svg><span>日本語</span>
    <svg class="ms-5" width="14" height="14" viewBox="0 0 14 14"><circle cx="3" cy="3" r="3" fill="#666"/><path d="M7 1.500h6.500v12H2.500V8M5 6h6M5 9h6M8 4v9" fill="none" stroke="#777"/></svg>
    <div class="ms-auto d-flex align-items-center gap-3">
      <svg width="92" height="14" viewBox="0 0 92 14" fill="none" stroke="#666"><path d="M1 2.500h6v9H1zM8 2.500h6v9H8z"/><path d="M38.500 1.500h14v12h-14zM41 5h9M41 8h9M41 11h9"/><path d="M77.500 1.500h12v10h-12zM80 5h7M80 8h5"/></svg>
      <span class="d-flex align-items-center gap-2">−<input class="zoomer" type="range" min="0" max="100" value="50" aria-label="ズーム">+</span><span>100%</span>
    </div>
  </footer>

  <div class="aero snip">
    <div class="tt d-flex align-items-center"><svg width="18" height="18"><use href="#sc"/></svg><span>Snipping Tool</span></div>
    <div class="capb gl"><button aria-label="最小化"><svg width="12" height="6"><use href="#cmin"/></svg></button><button aria-label="最大化"><svg width="10" height="10" viewBox="0 0 10 10"><path d="M.5.500h9v9h-9zM3.500 3.500h3v3h-3z" fill="none" stroke="#8a98a8"/></svg></button><button aria-label="閉じる"><svg width="12" height="10"><use href="#ccls"/></svg></button></div>
    <div class="cli">
      <div class="bar d-flex align-items-center">
        <button class="plain d-flex align-items-center gap-1"><svg width="24" height="24"><use href="#sc"/></svg><span>新規作成(<u>N</u>)</span></button>
        <svg class="ms-3 me-2" width="8" height="4"><use href="#dd"/></svg>
        <button class="plain d-flex align-items-center gap-2 off-text"><svg width="18" height="24" viewBox="0 0 18 24" fill="#f4f4f4" stroke="#bbb"><path d="M.5.500h12l5 5v18H.5z"/><path d="M5 8l8 9M13 8l-8 9" stroke-width="2"/></svg><span>キャンセル(<u>C</u>)</span></button>
        <button class="plain d-flex align-items-center gap-1 ms-auto"><svg width="22" height="24" viewBox="1 0 22 24"><circle cx="12" cy="12" r="8" fill="none" stroke="#9fb9d2" stroke-width="5"/><circle cx="12" cy="12" r="10" fill="none" stroke="#88a6c4" stroke-width="2" stroke-dasharray="3 2.500"/></svg><span>オプション(<u>O</u>)</span></button>
      </div>
      <div class="msg d-flex justify-content-between"><div>メニューから領域切り取りの種類を選択するか、[新規作<br>成] ボタンをクリックしてください。</div><svg class="me-1" width="16" height="16" viewBox="0 0 16 16"><circle cx="8" cy="8" r="7.500" fill="#1f3fa8" stroke="#8a9cc8"/><path d="M5.500 6q0-2.500 2.500-2.500T10.500 6q0 1.500-2.500 3v1M8 11v2" fill="none" stroke="#fff" stroke-width="1.600"/></svg></div>
    </div>
  </div>
</section>

<!-- right monitor -->
<section class="screen desk">
  <div class="icons">
    <a class="di" href="#"><svg><use href="#bin"/></svg><span>ごみ箱</span></a>
    <a class="di" href="#"><svg><use href="#app"/><use href="#lnk"/></svg><span>2017年度版<br>CP･CTP設計プ...</span></a>
    <a class="di" href="#"><svg><use href="#pdf"/><use href="#lnk"/></svg><span>Acrobat Reader<br>DC</span></a>
    <a class="di" href="#"><svg><use href="#cap"/><use href="#lnk"/></svg><span>Corel CAPTURE<br>X7 (64-Bit)</span></a>
    <a class="di" href="#"><svg><use href="#pho"/><use href="#lnk"/></svg><span>Corel<br>PHOTO-PAI...</span></a>
    <a class="di" href="#"><svg><use href="#drw"/><use href="#lnk"/></svg><span>CorelDRAW X7<br>(64-Bit)</span></a>
    <a class="di" href="#"><svg><use href="#dw"/><use href="#lnk"/></svg><span>DocuWorks<br>Desk</span></a>
    <a class="di" href="#"><svg><use href="#cr"/><use href="#lnk"/></svg><span>Google Chrome</span></a>
    <a class="di" href="#"><svg><use href="#leaf"/><use href="#lnk"/></svg><span>KKE Kaede</span></a>
    <a class="di" href="#"><svg><use href="#md"/><use href="#lnk"/></svg><span>MarkDown#<br>Editor</span></a>

    <a class="di" href="#"><svg><use href="#lock"/><use href="#lnk"/></svg><span>Microsoft<br>Baseline S...</span></a>
    <a class="di" href="#"><svg><use href="#rda"/><use href="#lnk"/></svg><span>RESP-D アニメ作<br>成</span></a>
    <a class="di" href="#"><svg><use href="#rsp"/><use href="#lnk"/></svg><span>RESP-D</span></a>
    <a class="di" href="#"><svg><use href="#rsp"/><use href="#lnk"/></svg><span>RESP-E</span></a>
    <a class="di" href="#"><svg><use href="#rda"/><use href="#lnk"/></svg><span>RESP-E_Anim...</span></a>
    <a class="di" href="#"><svg><use href="#f3t"/><use href="#lnk"/></svg><span>RESP-F3T</span></a>
    <a class="di" href="#"><svg><use href="#m2"/><use href="#lnk"/></svg><span>RESP-M2</span></a>
    <a class="di" href="#"><svg><use href="#mxi"/><use href="#lnk"/></svg><span>RESP-MX</span></a>
    <a class="di" href="#"><svg><use href="#stn"/><use href="#lnk"/></svg><span>STAN-V12.0</span></a>
    <a class="di" href="#"><svg><use href="#tv"/><use href="#lnk"/></svg><span>TeamViewer 9</span></a>

    <a class="di" href="#"><svg><use href="#cr"/><use href="#lnk"/></svg><span>Working Folder<br>のご紹介</span></a>
    <a class="di" href="#"><svg><use href="#act"/><use href="#lnk"/></svg><span>アルソルメガ強度<br>計算システム</span></a>
    <a class="di" href="#"><svg><use href="#wdlc"/><use href="#lnk"/></svg><span>楽しもう！ＰＣラ<br>イフ</span></a>
    <a class="di" href="#"><svg><use href="#hm"/><use href="#lnk"/></svg><span>秀丸</span></a>
    <a class="di" href="#"><svg><use href="#xl"/><use href="#scr"/><use href="#lnk"/></svg><span>擁壁・塀構造計算<br>プログラム</span></a>
    <a class="di" href="#"><svg><use href="#fx"/></svg><span>20170511_関電<br>美浜_モデルお...</span></a>
    <a class="di" href="#"><svg><use href="#fx"/></svg><span>20171020-1</span></a>
    <a class="di" href="#"><svg><use href="#fo"/></svg><span>20180725入出力<br>テスト</span></a>
    <a class="di" href="#"><svg><use href="#fo"/></svg><span>20180822_Im...<br>Projectに関す...</span></a>
    <a class="di" href="#"><svg><use href="#fr"/></svg><span>20180829</span></a>

    <a class="di" href="#"><svg><use href="#fo"/></svg><span>Data</span></a>
    <a class="di" href="#"><svg><use href="#fe"/></svg><span>DataStore</span></a>
    <a class="di" href="#"><svg><use href="#fo"/></svg><span>Download</span></a>
    <a class="di" href="#"><svg><use href="#fe"/></svg><span>inoue</span></a>
    <a class="di" href="#"><svg><use href="#fo"/></svg><span>izumi</span></a>
    <a class="di" href="#"><svg><use href="#ff"/></svg><span>Model201712...</span></a>
    <a class="di" href="#"><svg><use href="#ff"/></svg><span>Model2018030...<br>上下動入力によ...</span></a>
    <a class="di" href="#"><svg><use href="#fo"/></svg><span>msupdatechk</span></a>
    <a class="di" href="#"><svg><use href="#fx"/></svg><span>saito</span></a>
    <a class="di" href="#"><svg><use href="#fx"/></svg><span>SO</span></a>

    <a class="di" href="#"><svg><use href="#fr"/></svg><span>temp</span></a>
    <a class="di" href="#"><svg><use href="#ff"/></svg><span>usr</span></a>
    <a class="di" href="#"><svg><use href="#ff"/></svg><span>watanabe</span></a>
    <a class="di" href="#"><svg><use href="#fo"/></svg><span>WaveDataBase</span></a>
    <a class="di" href="#"><svg><use href="#ff"/></svg><span>yamada</span></a>
    <a class="di" href="#"><svg><use href="#ff"/></svg><span>アイコン</span></a>
    <a class="di" href="#"><svg><use href="#ff"/></svg><span>オイルダンパー...<br>リリーフ荷重の...</span></a>
    <a class="di" href="#"><svg><use href="#fo"/></svg><span>英語化</span></a>
    <a class="di" href="#"><svg><use href="#ff"/></svg><span>橘湾火力<br>20171102</span></a>
    <a class="di" href="#"><svg><use href="#fr"/></svg><span>新しいフォルダー</span></a>
  </div>
  <div class="icons more">
    <a class="di" href="#"><svg><use href="#fo"/></svg><span>新しいプロジェク<br>ト</span></a>
    <a class="di" href="#"><svg><use href="#fx"/></svg></a>
    <a class="di" href="#"><svg><use href="#doc"/></svg><span>er.docx</span></a>
    <a class="di" href="#"><svg><use href="#hmd"/></svg></a>
    <a class="di" href="#"><svg><use href="#blank"/></svg><span>Model201712...</span></a>
    <a class="di" href="#"><svg><use href="#rdoc"/></svg></a>
    <a class="di" href="#"><svg><use href="#stp"/></svg><span>setup-2017年度<br>版CP･CTP設計...</span></a>
    <a class="di" href="#"><svg><use href="#prg"/></svg></a>
    <a class="di" href="#"><svg><use href="#xl"/></svg><span>グラフ作成用.<br>xlsx</span></a>
    <a class="di" href="#"><svg><use href="#npd"/><use href="#lnk"/></svg></a>
    <a class="di" href="#"><svg><use href="#par"/></svg><span>上から.par</span></a>
    <a class="di" href="#"><svg><use href="#doc"/></svg></a>
  </div>

  <div class="aero expl">
    <div class="capb gl"><button aria-label="最小化"><svg width="12" height="6"><use href="#cmin"/></svg></button><button aria-label="最大化"><svg width="12" height="10"><use href="#cmax"/></svg></button><button aria-label="閉じる"><svg width="12" height="10"><use href="#ccls"/></svg></button></div>
    <div class="nav d-flex flex-nowrap">
      <svg width="70" height="28" viewBox="0 0 70 28"><path d="M12 1h40q10 0 12 12H2Q4 2 12 1z" fill="#aeb9c6"/><circle cx="14" cy="13" r="12" fill="#4668a8" stroke="#dbe4ee"/><path d="M8 13l7-6v4h6v4h-6v4z" fill="#fff"/><circle cx="42" cy="13" r="12" fill="#c9d2dc" stroke="#8a96a4"/><path d="M58 13h8l-4 4z" fill="#1f7fae"/></svg>
      <div class="addr d-flex flex-grow-1 align-items-start"><svg width="12" height="18" viewBox="0 0 14 18"><path d="M0 0h9l4 3v14H4L0 14z" fill="#e5c968"/></svg><b>▸</b><span>izumi</span><b>▸</b><span>20181017</span><b>▸</b><span>img</span></div>
      <div class="addr find ms-2 me-2 d-flex align-items-start"><i>img</i>の検索</div>
    </div>
  </div>

  <div class="aero paint">
    <div class="inner"><div class="m1"></div><div class="m2 d-flex justify-content-end"><div class="swatch"></div><div class="rule"></div></div><div class="m3"></div></div>
  </div>

  <div class="aero mx">
    <div class="tt d-flex align-items-center"><svg width="16" height="16"><use href="#mxi"/></svg><span>RESP-MX：名称未設定のプロジェクト</span></div>
    <div class="capb"><button aria-label="最小化"><svg width="12" height="6"><use href="#cmin"/></svg></button><button aria-label="最大化"><svg width="12" height="10"><use href="#cmax"/></svg></button><button class="red" aria-label="閉じる"><svg width="12" height="10"><use href="#ccls"/></svg></button></div>
    <div class="cli d-flex flex-column">
      <div class="mbar d-flex"><button class="on">ファイル(F)</button><button>ヘルプ</button></div>
      <div class="d-flex flex-grow-1">
        <div class="side d-flex flex-column">
          <div class="box tree1 gui">
            <div class="d-flex align-items-center"><svg width="54" height="16" viewBox="0 0 54 16"><path d="M4.500 0v16M23.500 0v8h11" stroke="#999" stroke-dasharray="1 1" fill="none"/><path d="M34 0h16v16H34z" fill="#8cc850"/><path d="M34 14q8-8 16 0v2H34z" fill="#5ea030"/></svg><span>解析条件_1</span></div>
            <div class="d-flex align-items-center"><svg width="35" height="16" viewBox="0 0 35 16"><path d="M4.500 0v4M9 8h6" stroke="#999" stroke-dasharray="1 1"/><path d="M.5 4.500h8v8h-8zM2 8.500h5" fill="#fff" stroke="#889"/><path d="M15 0h16v16H15z" fill="#ddd"/><path d="M15 7q8-3 16 0v9H15z" fill="#cf8fd0"/></svg><span>解析ケース</span></div>
            <div class="d-flex align-items-center"><svg width="54" height="16" viewBox="0 0 54 16"><path d="M23.500 0v8h11" stroke="#999" stroke-dasharray="1 1" fill="none"/><path d="M34 0h16v16H34z" fill="#ddc8dd"/><path d="M34 8q8-3 16 0v8H34z" fill="#cc60cc"/></svg><span>解析ケース_1 - ケース数: 0</span></div>
          </div>
          <div class="box tree2"><ul class="list-unstyled m-0 position-relative"><li>応答</li><li>履歴</li><li>時刻歴</li><svg class="position-absolute top-0" width="22" height="60" viewBox="0 0 22 60"><path d="M13.500 12v44M13 11.500h9M13 33.500h9M13 55.500h9" stroke="#888" stroke-dasharray="1 1"/></svg></ul></div>
        </div>
        <div class="main flex-grow-1 d-flex flex-column">
          <div class="tools d-flex align-items-start gui"><input type="checkbox" id="allp"><label class="me-auto" for="allp">全ケースで使用されていないパネルも表示する</label>
            <button class="wb s">固有値表</button><button class="wb l">最大応答値まとめ</button><button class="wb m">各層最大応答値</button><button class="wb lt">計算... / 結果表示</button></div>
          <div class="canvas flex-grow-1">
            <div class="stackp">
              <div class="hd">項セット_1</div>
              <div class="blk d-flex justify-content-end"><span></span></div>
              <div class="pc"><div class="tp d-flex justify-content-end gap-2"><svg width="13" height="13"><use href="#pen"/></svg><svg width="26" height="12"><use href="#key"/></svg></div><button class="nm k1">階_重量_1</button></div>
              <div class="pc"><div class="tp d-flex justify-content-end gap-2"><svg class="me-auto" width="54" height="16" viewBox="0 0 54 16" fill="#aaa" stroke="#777"><path d="M.5.500h24v15H.5zM27.500.500h24v15h-24z"/><path d="M3 7l2-3 2 8 2-9 2 9 2-7 2 5 2-4 2 3h3M31 12q2-8 6-9h11q-3 9-7 9zM29 8h20M40 3v10" fill="none" stroke="#444"/></svg><svg width="13" height="13"><use href="#pen"/></svg><svg width="26" height="12"><use href="#key"/></svg></div><button class="nm k2">復元力_1</button></div>
              <div class="pc"><div class="tp d-flex justify-content-end gap-2"><svg width="13" height="13"><use href="#pen"/></svg><svg width="26" height="12"><use href="#key"/></svg></div><button class="nm k3">解析条件_1</button></div>
              <div class="pc mb-0"><div class="tp d-flex justify-content-end gap-2"><svg width="13" height="13"><use href="#pen"/></svg><svg width="26" height="12"><use href="#key"/></svg></div><button class="nm k4">解析ケース_1</button></div>
            </div>
          </div>
        </div>
      </div>
      <div class="mstat"></div>
      <div class="mnu m-a">
        <a class="mi" href="#"><span class="ic"><svg width="16" height="16"><use href="#nw"/></svg></span>新規作成(N)<i class="tri"></i></a>
        <a class="mi" href="#"><span class="ic"></span>新規作成ダイアログを表示</a>
        <a class="mi" href="#"><span class="ic"><svg width="16" height="16"><use href="#op"/></svg></span>開く(O)<span class="key">Ctrl+O</span></a>
        <a class="mi on" href="#"><span class="ic"></span>インポート<i class="tri"></i></a>
        <div class="ms"></div>
        <a class="mi" href="#"><span class="ic"><svg width="16" height="16"><use href="#sv"/></svg></span>上書き保存(S)<span class="key">Ctrl+S</span></a>
        <a class="mi" href="#"><span class="ic"></span>名前を付けて保存<span class="key">Ctrl+Shift+S</span></a>
        <div class="ms"></div>
        <a class="mi" href="#"><span class="ic"></span>保存テスト用メニュー/旧保存形式(yaml)<i class="tri"></i></a>
      </div>
      <div class="mnu m-b">
        <a class="mi" href="#"><span class="ic"></span>RESP-MX（.mxpj)</a>
        <a class="mi" href="#"><span class="ic"></span>RESP-M2（.m2c .rlt)</a>
      </div>
    </div>
  </div>

  <footer class="tbar d-flex">
    <button class="tk orb" aria-label="スタート"><svg width="36" height="36" viewBox="0 0 36 36"><circle cx="18" cy="18" r="17.500" fill="url(#gO)" stroke="#1d3f60"/><path d="M9 11q5-3 8 0l-2 7q-4-2-8 0z" fill="#e8542c"/><path d="M18 11q4 3 9 1l-2 7q-5 2-9-1z" fill="#8cc63c"/><path d="M7 19q4-2 8 0l-2 7q-4-2-7 0z" fill="#3a9be0"/><path d="M16 19q4 3 9 1l-2 7q-5 2-9-1z" fill="#fbc92c"/></svg></button>
    <button class="tk" aria-label="Internet Explorer"><svg width="32" height="32" viewBox="0 0 32 32"><path d="M26 20h-6q-1 3-4 3-4 0-4-5h15q1-11-11-12-11 1-11 12 1 10 11 10 8 0 10-8zM12 14q1-4 4-4t5 4z" fill="#38a4e8"/><path d="M3 26Q-2 34 12 26M10 8Q24-4 29 3q2 4-3 8" fill="none" stroke="#f4c430" stroke-width="2.500"/></svg></button>
    <button class="tk" aria-label="Media Player"><svg width="30" height="28" viewBox="0 0 30 28"><path d="M4 2h20v22H4zM22 4h4v20h-4z" fill="#9cc8e6" stroke="#4a8ab8"/><circle cx="12" cy="14" r="9" fill="#f07a1e"/><path d="M9 9l8 5-8 5z" fill="#fff"/></svg></button>
    <button class="tk run" aria-label="Snipping Tool"><svg width="32" height="32"><use href="#sc"/></svg></button>
    <button class="tk" aria-label="メモ帳"><svg width="32" height="30" viewBox="0 0 32 30"><path d="M12 2h18l-2 24H2z" fill="#7fc6d8"/><path d="M2 26h26l2-10v12H6z" fill="#e8eef0"/><path d="M12 3h18" stroke="#777" stroke-width="3" stroke-dasharray="1 1"/></svg></button>
    <button class="tk run" aria-label="エクスプローラー"><svg width="32" height="30" viewBox="0 0 32 30"><path d="M1 3h10l2 3h17v22H1z" fill="#f2d980" stroke="#c0a040"/><path d="M4 1h4v4H4z" fill="#3a9a4a"/><path d="M12 3h4v4h-4z" fill="#d84030"/><path d="M21 5h5v4h-5z" fill="#3a8ad0"/><path d="M5 28v-9h22v9h-5v-4H10v4z" fill="#8cc6ea" stroke="#4a90c0"/></svg></button>
    <button class="tk run" aria-label="Word"><svg width="32" height="30" viewBox="0 0 32 30"><path d="M16 3h14v24H16z" fill="#fff" stroke="#2b579a"/><path d="M18 8h10M18 12h10M18 16h10M18 20h10" stroke="#2b579a"/><path d="M1 4l18-4v30L1 26z" fill="#2b579a"/><path d="M4 10l3 10 3-9 3 9 3-10" fill="none" stroke="#fff" stroke-width="2"/></svg></button>
    <button class="tk run" aria-label="Chrome"><svg width="32" height="32"><use href="#cr"/></svg></button>
    <button class="tk" aria-label="変換"><svg width="32" height="32" viewBox="0 0 32 32"><path d="M10 1h16l5 6v24H10z" fill="#e8f2fb" stroke="#3a78b8"/><path d="M13 8h14M13 11h14M13 23h14M13 27h14" stroke="#6aa0d0"/><path d="M13 15h16M13 19h16" stroke="#f0b020" stroke-width="2.500"/><path d="M1 13h8V8l8 9-8 9v-5H1z" fill="#f06a28" stroke="#b8481a"/></svg></button>
    <button class="tk" aria-label="RESP-D"><svg width="32" height="32"><use href="#rda"/></svg></button>
    <button class="tk run act" aria-label="RESP-MX"><svg width="32" height="32"><use href="#mxi"/></svg></button>
    <button class="tk run" aria-label="ペイント"><svg width="32" height="32" viewBox="0 0 32 32"><path d="M16 6q14 0 12 12-2 11-14 11-4 0-3-4 1-3-3-4-7 0-6-5 2-9 14-10z" fill="#cfe4f2" stroke="#5a90b8"/><circle cx="7" cy="18" r="2.500" fill="#e04030"/><circle cx="11" cy="12" r="2.500" fill="#40b050"/><circle cx="18" cy="10" r="2.500" fill="#f0b030"/><path d="M26 4l3 2-10 24-2-1z" fill="#e08a3c"/><path d="M24 1l6 1-1 6-4-1z" fill="#a87048"/></svg></button>
    <div class="tray d-flex align-items-center">
      <svg width="16" height="16" viewBox="0 0 16 16"><path d="M.5.500h15v15H.5z" fill="#fff" stroke="#d22"/><circle cx="8" cy="8" r="6" fill="#d83030"/><path d="M5 8l2.500 3L13 3" stroke="#fff" stroke-width="2" fill="none"/></svg>
      <span class="ime ms-2">A 般</span>
      <svg width="16" height="16" viewBox="0 0 16 16"><path d="M1 8h14l-2 8H3z" fill="#f4c84a"/><path d="M3 2l6 8M8 1l1 8" stroke="#c03a2a" stroke-width="3"/><circle cx="12" cy="4" r="3" fill="#8cc6f0" stroke="#2a6ab0"/></svg>
      <svg width="16" height="16" viewBox="0 0 16 16"><path d="M1 2h10v9H1z" fill="#eef"/><circle cx="11" cy="7" r="4" fill="#cfe6fa" stroke="#2a6ab0" stroke-width="1.500"/><path d="M8 10l-4 5" stroke="#2a6ab0" stroke-width="2"/></svg>
      <svg width="17" height="16" viewBox="0 0 17 16"><path d="M1 7l10-5 5 4v4L6 15l-5-3z" fill="#f4a83c" stroke="#b8741c"/><path d="M1 8l5 3 10-5" stroke="#ffe0a0" fill="none"/></svg>
      <svg width="16" height="16" viewBox="0 0 16 16"><circle cx="8" cy="8" r="7.500" fill="#1010a0" stroke="#eee"/><path d="M5.500 6q0-2.500 2.500-2.500T10.500 6q0 1.500-2.500 3v1M8 11v2" fill="none" stroke="#fff" stroke-width="1.600"/></svg>
      <span class="locks ms-1">CAPS<br>KANA</span><svg class="me-2" width="9" height="18" viewBox="0 0 9 18"><path d="M1 5h5v3H1zM3 4V2h5v3H6" fill="none" stroke="#fff"/><path d="M2 13h6l-3 3z" fill="#fff"/></svg>
      <svg class="me-2" width="9" height="6" viewBox="0 0 9 6"><path d="M0 5h9L4.500 0z" fill="#fff"/></svg>
      <svg class="me-1" width="18" height="18" viewBox="0 0 18 18"><path d="M2 1v16M4 3q4-2 6 0t6 0v7q-4 2-6 0t-6 0z" fill="#fff" stroke="#fff"/></svg>
      <svg class="me-1" width="18" height="16" viewBox="0 0 18 16"><path d="M1 5h3l5-4v14l-5-4H1z" fill="#fff"/><circle cx="13" cy="11" r="4.500" fill="#d83030"/><path d="M11 9l4 4M15 9l-4 4" stroke="#fff" stroke-width="1.500"/></svg>
      <svg width="18" height="18" viewBox="0 0 18 18"><path d="M5 4h11v9H5zM7 16h8" fill="#7890a8" stroke="#fff" stroke-width="1.500"/><path d="M2 1v5q2 3 4 0V1M4 7v9" fill="none" stroke="#fff" stroke-width="1.500"/></svg>
      <div class="clock">14:20<br>2018/10/17</div>
      <button class="showd" aria-label="デスクトップの表示"></button>
    </div>
  </footer>
</section>
</div>
<script src="https://cdn.jsdelivr.net/npm/bootstrap@5.3.0/dist/js/bootstrap.bundle.min.js"></script>
</body>
</html>
